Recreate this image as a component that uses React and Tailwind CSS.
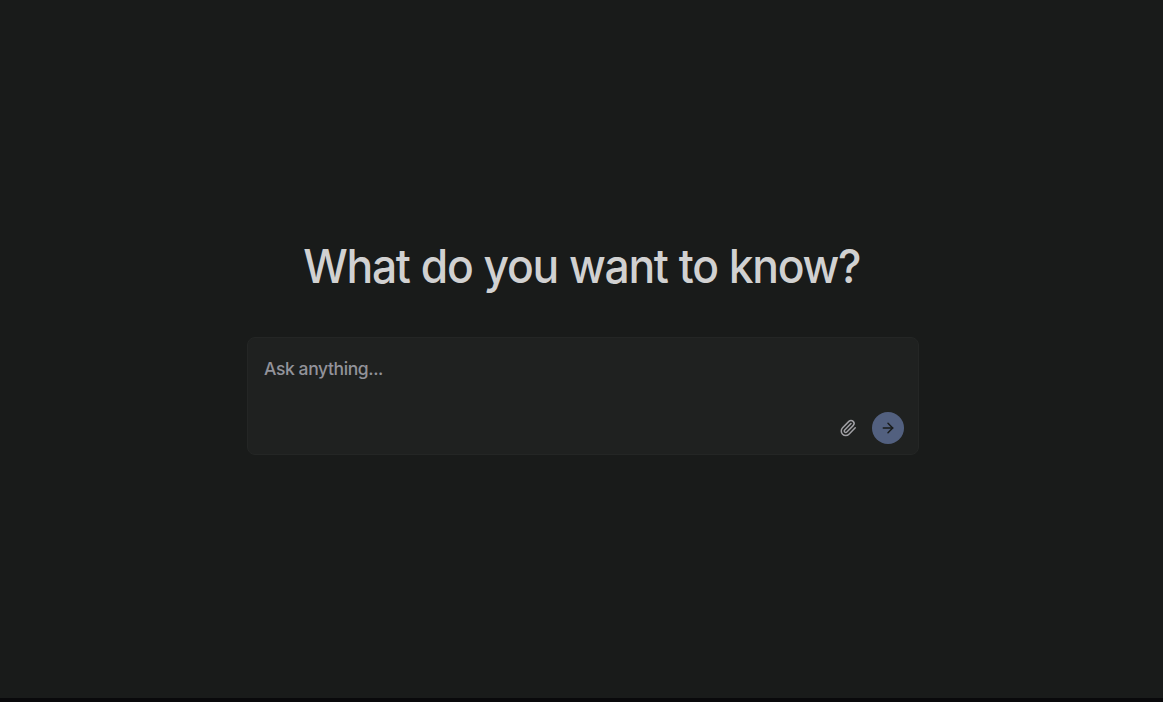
import { ArrowRight, Paperclip } from "lucide-react";

export default function App() {
  return (
    <div className="flex h-[702px] flex-col bg-[#191b1a] font-['Inter','Liberation_Sans',sans-serif]">
      <main className="flex flex-1 flex-col items-center pt-[236px] pl-[3px]">
        <h1 className="mr-[3px] h-[60px] scale-x-[0.945] text-[47px] leading-[60px] font-medium tracking-[-1.35px] whitespace-nowrap text-[#d1d1d1] antialiased [word-spacing:0.5px]">
          What do you want to know?
        </h1>
        <form className="mt-[41px] flex h-[118px] w-[672px] flex-col justify-between rounded-lg border border-[#242625] bg-[#1f2120] pt-[17px] pr-[14px] pb-[10px] pl-4">
          <textarea
            placeholder="Ask anything..."
            className="h-7 w-full resize-none overflow-hidden bg-transparent text-[17.5px] leading-7 font-[450] tracking-[-0.4px] text-[#d1d1d1] outline-none placeholder:text-[#92939a]"
          />
          <div className="flex items-center justify-end gap-[15px]">
            <button type="button" aria-label="Attach" className="text-[#a0a0a4]">
              <Paperclip size={18} strokeWidth={2} />
            </button>
            <button
              type="button"
              aria-label="Submit"
              className="flex size-8 items-center justify-center rounded-full bg-[#52607f] text-[#191b1a]"
            >
              <ArrowRight size={16} strokeWidth={2.25} />
            </button>
          </div>
        </form>
      </main>
      <div className="h-1 bg-[#09090b]" />
    </div>
  );
}
